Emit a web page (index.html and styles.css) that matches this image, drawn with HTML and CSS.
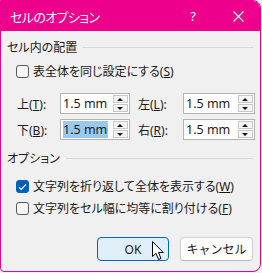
FILE: index.html
```html
<!DOCTYPE html>
<html lang="ja">
<head>
    <meta charset="UTF-8">
    <meta name="viewport" content="width=device-width, initial-scale=1.0">
    <title>セルのオプション</title>
    <link rel="stylesheet" href="styles.css">
</head>
<body>
    <div class="window">
        <div class="titlebar">
            <span class="title">セルのオプション</span>
            <span class="help">?</span>
            <svg class="close" width="11" height="11" viewBox="0 0 11 11">
                <path d="M0.5 0.5 L10.5 10.5 M10.5 0.5 L0.5 10.5" stroke="#fff" stroke-width="1.1" fill="none"/>
            </svg>
        </div>
        <div class="content">
            <div class="group-title"><span>セル内の配置</span><span class="rule"></span></div>
            <label class="check-row first">
                <span class="box"></span>
                <span>表全体を同じ設定にする(<u>S</u>)</span>
            </label>
            <div class="fields">
                <span class="label">上(<u>T</u>):</span>
                <div class="spin"><span class="value">1.5 mm</span><span class="arrows"><i class="up"></i><i class="down"></i></span></div>
                <span class="label right">左(<u>L</u>):</span>
                <div class="spin wide"><span class="value">1.5 mm</span><span class="arrows"><i class="up"></i><i class="down"></i></span></div>
                <span class="label">下(<u>B</u>):</span>
                <div class="spin"><span class="value selected">1.5 mm</span><span class="arrows"><i class="up"></i><i class="down"></i></span></div>
                <span class="label right">右(<u>R</u>):</span>
                <div class="spin wide"><span class="value">1.5 mm</span><span class="arrows"><i class="up"></i><i class="down"></i></span></div>
            </div>
            <div class="group-title second"><span>オプション</span><span class="rule"></span></div>
            <label class="check-row options">
                <span class="box checked">
                    <svg width="9" height="8" viewBox="0 0 9 8"><path d="M1 4.2 L3.3 6.4 L8 1.4" stroke="#fff" stroke-width="1.2" fill="none"/></svg>
                </span>
                <span>文字列を折り返して全体を表示する(<u>W</u>)</span>
            </label>
            <label class="check-row next">
                <span class="box"></span>
                <span>文字列をセル幅に均等に割り付ける(<u>F</u>)</span>
            </label>
            <div class="buttons">
                <button class="btn default">OK</button>
                <button class="btn">キャンセル</button>
            </div>
        </div>
        <svg class="cursor" width="13" height="20" viewBox="0 0 13 20">
            <path d="M0.5 0.5 L0.5 15.5 L4 12.3 L6.6 18.5 L9 17.5 L6.5 11.5 L11.3 11.5 Z" fill="#fff" stroke="#000" stroke-width="1"/>
        </svg>
    </div>
</body>
</html>
```

FILE: styles.css
```css
html, body {
    margin: 0;
    padding: 0;
    background: #f0f0f0;
}
body {
    font-family: "Noto Sans", "Noto Sans CJK JP", sans-serif;
    font-size: 12px;
    color: #1a1a1a;
    font-feature-settings: "palt";
}
.window {
    position: relative;
    width: 259px;
    height: 270px;
    border: 1px solid #ec008c;
    border-radius: 0 8px 8px 4px;
    background: #f0f0f0;
    overflow: hidden;
}
.titlebar {
    height: 30px;
    background: #ec008c;
    color: #fff;
    display: flex;
    align-items: center;
    padding-left: 9px;
}
.title {
    flex: 1;
    font-size: 13px;
    letter-spacing: -0.6px;
}
.help {
    font-size: 13px;
    margin-right: 37px;
}
.close {
    margin-right: 16px;
}
.content {
    padding: 0 7px 0 6px;
}
.group-title {
    display: flex;
    align-items: center;
    height: 16px;
    margin-top: 9px;
    line-height: 16px;
}
.group-title.second {
    margin-top: 11px;
}
.rule {
    flex: 1;
    height: 1px;
    background: #d8d8d8;
    margin-left: 6px;
    margin-top: -1px;
}
.check-row {
    display: flex;
    align-items: center;
    height: 13px;
    margin-left: 9px;
    line-height: 13px;
}
.check-row.first {
    margin-top: 9px;
}
.check-row.options {
    margin-top: 13px;
}
.check-row.next {
    margin-top: 9px;
}
.box {
    box-sizing: border-box;
    width: 13px;
    height: 13px;
    border: 1px solid #5a5a5a;
    border-radius: 3px;
    background: #f8f8f8;
    margin-right: 4px;
    display: flex;
    align-items: center;
    justify-content: center;
}
.box.checked {
    background: #005fb8;
    border-color: #005fb8;
}
u {
    text-decoration-thickness: 1px;
    text-underline-offset: 1px;
}
.fields {
    display: grid;
    grid-template-columns: 43px 70px 53px 72px;
    grid-auto-rows: 21px;
    row-gap: 5px;
    margin-top: 15px;
    margin-left: 10px;
    align-items: center;
}
.label.right {
    padding-left: 8px;
}
.spin {
    box-sizing: border-box;
    height: 21px;
    border: 1px solid #b4b4b4;
    background: #fff;
    display: flex;
    align-items: center;
    padding-left: 2px;
}
.value {
    flex: 1;
    font-size: 12.5px;
    line-height: 17px;
}
.value.selected {
    flex: 0 0 auto;
    background: #99c9ef;
    padding-right: 1px;
    margin-right: auto;
}
.arrows {
    display: flex;
    flex-direction: column;
    width: 15px;
    height: 17px;
    margin-right: 1px;
    gap: 1px;
}
.arrows i {
    flex: 1;
    box-sizing: border-box;
    border: 1px solid #c8c8c8;
    background: #f6f6f6;
    position: relative;
}
.arrows i::after {
    content: "";
    position: absolute;
    left: 3px;
    top: 2px;
    border-left: 3.5px solid transparent;
    border-right: 3.5px solid transparent;
}
.arrows .up::after {
    border-bottom: 3.5px solid #111;
}
.arrows .down::after {
    top: 1.5px;
    border-top: 3.5px solid #111;
}
.buttons {
    display: flex;
    justify-content: flex-end;
    gap: 11px;
    margin-top: 22px;
}
.btn {
    box-sizing: border-box;
    width: 73px;
    height: 24px;
    border: 1px solid #d0d0d0;
    border-bottom-color: #bdbdbd;
    border-radius: 4px;
    background: #fdfdfd;
    font-family: inherit;
    font-size: 12px;
    color: #1a1a1a;
    padding: 0;
}
.btn.default {
    width: 72px;
    background: #e0eef9;
    border: 1px solid #0067c0;
}
.cursor {
    position: absolute;
    left: 151px;
    top: 240px;
}
```
